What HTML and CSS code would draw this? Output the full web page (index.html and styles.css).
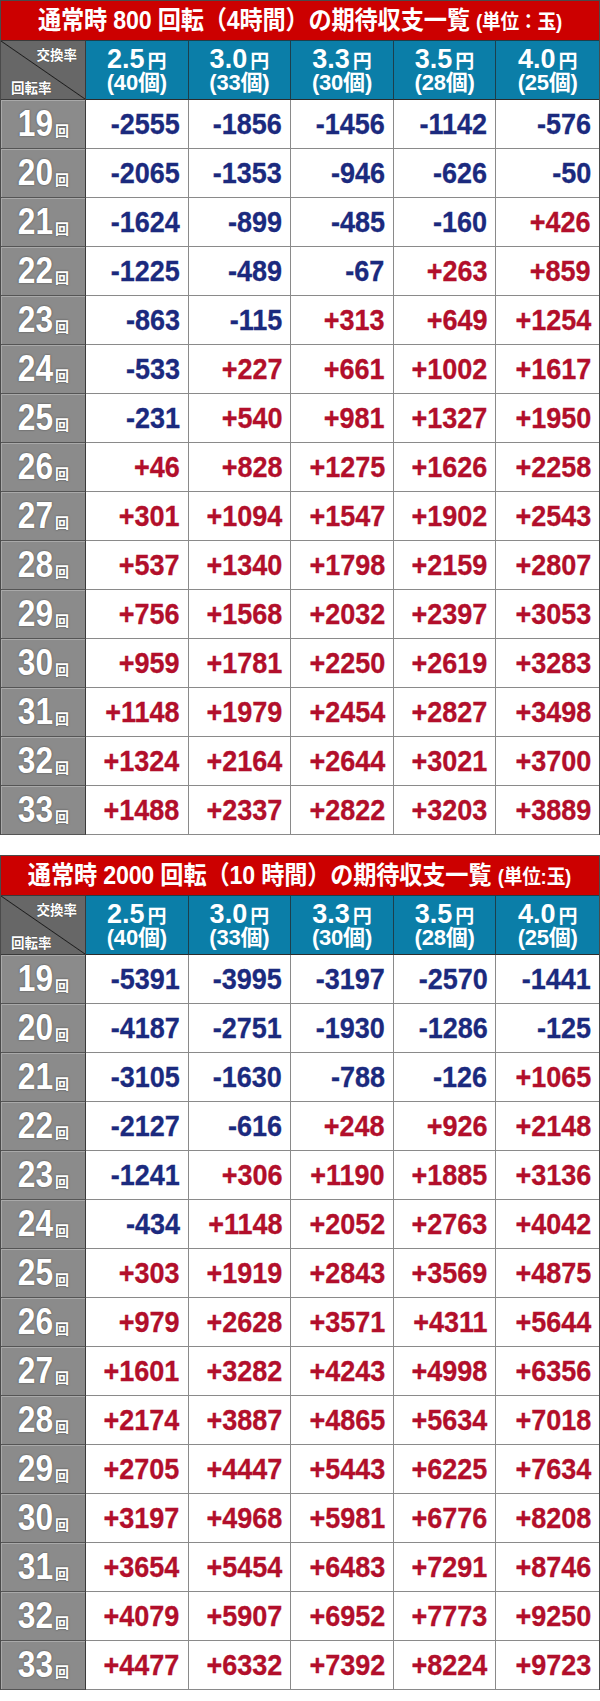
FILE: index.html
```html
<!DOCTYPE html>
<html lang="ja">
<head>
<meta charset="utf-8">
<title>期待収支一覧</title>
<link rel="stylesheet" href="styles.css">
</head>
<body>
<section class="tbl">
  <div class="title"><span class="tt">通常時 800 回転（4時間）の期待収支一覧 <small>(単位：玉)</small></span></div>
  <div class="grid">
    <div class="corner"><span class="c1">交換率</span><span class="c2">回転率</span></div>
    <div class="hd"><span class="l1"><b>2.5</b>円</span><span class="l2">(40個)</span></div>
    <div class="hd"><span class="l1"><b>3.0</b>円</span><span class="l2">(33個)</span></div>
    <div class="hd"><span class="l1"><b>3.3</b>円</span><span class="l2">(30個)</span></div>
    <div class="hd"><span class="l1"><b>3.5</b>円</span><span class="l2">(28個)</span></div>
    <div class="hd"><span class="l1"><b>4.0</b>円</span><span class="l2">(25個)</span></div>

    <div class="rl"><span><b>19</b>回</span></div><div class="c n"><span>-2555</span></div><div class="c n"><span>-1856</span></div><div class="c n"><span>-1456</span></div><div class="c n"><span>-1142</span></div><div class="c n"><span>-576</span></div>
    <div class="rl"><span><b>20</b>回</span></div><div class="c n"><span>-2065</span></div><div class="c n"><span>-1353</span></div><div class="c n"><span>-946</span></div><div class="c n"><span>-626</span></div><div class="c n"><span>-50</span></div>
    <div class="rl"><span><b>21</b>回</span></div><div class="c n"><span>-1624</span></div><div class="c n"><span>-899</span></div><div class="c n"><span>-485</span></div><div class="c n"><span>-160</span></div><div class="c p"><span>+426</span></div>
    <div class="rl"><span><b>22</b>回</span></div><div class="c n"><span>-1225</span></div><div class="c n"><span>-489</span></div><div class="c n"><span>-67</span></div><div class="c p"><span>+263</span></div><div class="c p"><span>+859</span></div>
    <div class="rl"><span><b>23</b>回</span></div><div class="c n"><span>-863</span></div><div class="c n"><span>-115</span></div><div class="c p"><span>+313</span></div><div class="c p"><span>+649</span></div><div class="c p"><span>+1254</span></div>
    <div class="rl"><span><b>24</b>回</span></div><div class="c n"><span>-533</span></div><div class="c p"><span>+227</span></div><div class="c p"><span>+661</span></div><div class="c p"><span>+1002</span></div><div class="c p"><span>+1617</span></div>
    <div class="rl"><span><b>25</b>回</span></div><div class="c n"><span>-231</span></div><div class="c p"><span>+540</span></div><div class="c p"><span>+981</span></div><div class="c p"><span>+1327</span></div><div class="c p"><span>+1950</span></div>
    <div class="rl"><span><b>26</b>回</span></div><div class="c p"><span>+46</span></div><div class="c p"><span>+828</span></div><div class="c p"><span>+1275</span></div><div class="c p"><span>+1626</span></div><div class="c p"><span>+2258</span></div>
    <div class="rl"><span><b>27</b>回</span></div><div class="c p"><span>+301</span></div><div class="c p"><span>+1094</span></div><div class="c p"><span>+1547</span></div><div class="c p"><span>+1902</span></div><div class="c p"><span>+2543</span></div>
    <div class="rl"><span><b>28</b>回</span></div><div class="c p"><span>+537</span></div><div class="c p"><span>+1340</span></div><div class="c p"><span>+1798</span></div><div class="c p"><span>+2159</span></div><div class="c p"><span>+2807</span></div>
    <div class="rl"><span><b>29</b>回</span></div><div class="c p"><span>+756</span></div><div class="c p"><span>+1568</span></div><div class="c p"><span>+2032</span></div><div class="c p"><span>+2397</span></div><div class="c p"><span>+3053</span></div>
    <div class="rl"><span><b>30</b>回</span></div><div class="c p"><span>+959</span></div><div class="c p"><span>+1781</span></div><div class="c p"><span>+2250</span></div><div class="c p"><span>+2619</span></div><div class="c p"><span>+3283</span></div>
    <div class="rl"><span><b>31</b>回</span></div><div class="c p"><span>+1148</span></div><div class="c p"><span>+1979</span></div><div class="c p"><span>+2454</span></div><div class="c p"><span>+2827</span></div><div class="c p"><span>+3498</span></div>
    <div class="rl"><span><b>32</b>回</span></div><div class="c p"><span>+1324</span></div><div class="c p"><span>+2164</span></div><div class="c p"><span>+2644</span></div><div class="c p"><span>+3021</span></div><div class="c p"><span>+3700</span></div>
    <div class="rl"><span><b>33</b>回</span></div><div class="c p"><span>+1488</span></div><div class="c p"><span>+2337</span></div><div class="c p"><span>+2822</span></div><div class="c p"><span>+3203</span></div><div class="c p"><span>+3889</span></div>
  </div>
</section>

<section class="tbl">
  <div class="title"><span class="tt">通常時 2000 回転（10 時間）の期待収支一覧 <small>(単位:玉)</small></span></div>
  <div class="grid">
    <div class="corner"><span class="c1">交換率</span><span class="c2">回転率</span></div>
    <div class="hd"><span class="l1"><b>2.5</b>円</span><span class="l2">(40個)</span></div>
    <div class="hd"><span class="l1"><b>3.0</b>円</span><span class="l2">(33個)</span></div>
    <div class="hd"><span class="l1"><b>3.3</b>円</span><span class="l2">(30個)</span></div>
    <div class="hd"><span class="l1"><b>3.5</b>円</span><span class="l2">(28個)</span></div>
    <div class="hd"><span class="l1"><b>4.0</b>円</span><span class="l2">(25個)</span></div>

    <div class="rl"><span><b>19</b>回</span></div><div class="c n"><span>-5391</span></div><div class="c n"><span>-3995</span></div><div class="c n"><span>-3197</span></div><div class="c n"><span>-2570</span></div><div class="c n"><span>-1441</span></div>
    <div class="rl"><span><b>20</b>回</span></div><div class="c n"><span>-4187</span></div><div class="c n"><span>-2751</span></div><div class="c n"><span>-1930</span></div><div class="c n"><span>-1286</span></div><div class="c n"><span>-125</span></div>
    <div class="rl"><span><b>21</b>回</span></div><div class="c n"><span>-3105</span></div><div class="c n"><span>-1630</span></div><div class="c n"><span>-788</span></div><div class="c n"><span>-126</span></div><div class="c p"><span>+1065</span></div>
    <div class="rl"><span><b>22</b>回</span></div><div class="c n"><span>-2127</span></div><div class="c n"><span>-616</span></div><div class="c p"><span>+248</span></div><div class="c p"><span>+926</span></div><div class="c p"><span>+2148</span></div>
    <div class="rl"><span><b>23</b>回</span></div><div class="c n"><span>-1241</span></div><div class="c p"><span>+306</span></div><div class="c p"><span>+1190</span></div><div class="c p"><span>+1885</span></div><div class="c p"><span>+3136</span></div>
    <div class="rl"><span><b>24</b>回</span></div><div class="c n"><span>-434</span></div><div class="c p"><span>+1148</span></div><div class="c p"><span>+2052</span></div><div class="c p"><span>+2763</span></div><div class="c p"><span>+4042</span></div>
    <div class="rl"><span><b>25</b>回</span></div><div class="c p"><span>+303</span></div><div class="c p"><span>+1919</span></div><div class="c p"><span>+2843</span></div><div class="c p"><span>+3569</span></div><div class="c p"><span>+4875</span></div>
    <div class="rl"><span><b>26</b>回</span></div><div class="c p"><span>+979</span></div><div class="c p"><span>+2628</span></div><div class="c p"><span>+3571</span></div><div class="c p"><span>+4311</span></div><div class="c p"><span>+5644</span></div>
    <div class="rl"><span><b>27</b>回</span></div><div class="c p"><span>+1601</span></div><div class="c p"><span>+3282</span></div><div class="c p"><span>+4243</span></div><div class="c p"><span>+4998</span></div><div class="c p"><span>+6356</span></div>
    <div class="rl"><span><b>28</b>回</span></div><div class="c p"><span>+2174</span></div><div class="c p"><span>+3887</span></div><div class="c p"><span>+4865</span></div><div class="c p"><span>+5634</span></div><div class="c p"><span>+7018</span></div>
    <div class="rl"><span><b>29</b>回</span></div><div class="c p"><span>+2705</span></div><div class="c p"><span>+4447</span></div><div class="c p"><span>+5443</span></div><div class="c p"><span>+6225</span></div><div class="c p"><span>+7634</span></div>
    <div class="rl"><span><b>30</b>回</span></div><div class="c p"><span>+3197</span></div><div class="c p"><span>+4968</span></div><div class="c p"><span>+5981</span></div><div class="c p"><span>+6776</span></div><div class="c p"><span>+8208</span></div>
    <div class="rl"><span><b>31</b>回</span></div><div class="c p"><span>+3654</span></div><div class="c p"><span>+5454</span></div><div class="c p"><span>+6483</span></div><div class="c p"><span>+7291</span></div><div class="c p"><span>+8746</span></div>
    <div class="rl"><span><b>32</b>回</span></div><div class="c p"><span>+4079</span></div><div class="c p"><span>+5907</span></div><div class="c p"><span>+6952</span></div><div class="c p"><span>+7773</span></div><div class="c p"><span>+9250</span></div>
    <div class="rl"><span><b>33</b>回</span></div><div class="c p"><span>+4477</span></div><div class="c p"><span>+6332</span></div><div class="c p"><span>+7392</span></div><div class="c p"><span>+8224</span></div><div class="c p"><span>+9723</span></div>
  </div>
</section>
</body>
</html>
```

FILE: styles.css
```css
* { box-sizing: border-box; }

html, body {
  margin: 0;
  padding: 0;
  background: #ffffff;
}

body {
  width: 600px;
  font-family: "Liberation Sans", "Noto Sans CJK JP", sans-serif;
}

.tbl {
  width: 600px;
  margin-bottom: 20px;
}

.title {
  height: 40px;
  background: #cc0000;
  border: 1px solid #4a4a4a;
  border-bottom: none;
  display: flex;
  align-items: center;
  justify-content: center;
  color: #ffffff;
  overflow: hidden;
}

.tt {
  display: inline-block;
  font-weight: bold;
  font-size: 25.5px;
  line-height: 1;
  white-space: nowrap;
  transform: scaleX(0.91);
  letter-spacing: -0.2px;
}

.tt small {
  font-size: 20.5px;
}

.grid {
  display: grid;
  grid-template-columns: 85px repeat(5, 1fr);
  grid-template-rows: 60px repeat(15, 49px);
  border-left: 1px solid #4a4a4a;
  border-right: 1px solid #4a4a4a;
}

/* corner header cell */
.corner {
  position: relative;
  background:
    linear-gradient(to top right, transparent calc(50% - 0.9px), #1e1e1e 50%, transparent calc(50% + 0.9px)),
    #676767;
  border-right: 1px solid #3a3a3a;
  border-bottom: 1px solid #3a3a3a;
  border-top: 1px solid #3a3a3a;
  color: #ffffff;
  font-family: "Noto Sans CJK JP", sans-serif;
  font-weight: bold;
  font-size: 13.5px;
  line-height: 1;
  text-shadow: 0 0 1px rgba(0, 0, 0, 0.6);
}

.corner .c1 {
  position: absolute;
  top: 7px;
  right: 8px;
}

.corner .c2 {
  position: absolute;
  left: 10px;
  bottom: 5px;
}

/* blue header cells */
.hd {
  background: #0b7ea8;
  border-right: 1px solid #1d3f4c;
  border-bottom: 1px solid #2c2c2c;
  border-top: 1px solid #1d3f4c;
  color: #ffffff;
  display: flex;
  flex-direction: column;
  align-items: center;
  justify-content: center;
  padding-top: 1px;
  font-weight: bold;
}

.hd:nth-child(6) {
  border-right: none;
}

.hd .l1 {
  font-family: "Noto Sans CJK JP", sans-serif;
  font-size: 19px;
  line-height: 24px;
  height: 24px;
  display: flex;
  align-items: baseline;
}

.hd .l1 b {
  font-family: "Liberation Sans", sans-serif;
  font-size: 27px;
  margin-right: 3px;
}

.hd .l2 {
  font-family: "Liberation Sans", "Noto Sans CJK JP", sans-serif;
  font-size: 22px;
  line-height: 24px;
  letter-spacing: -0.2px;
}

/* row labels */
.rl {
  background: #8b8b8b;
  border-right: 1px solid #3a3a3a;
  border-bottom: 1px solid #555555;
  box-shadow: inset 1px 1px 0 #a9a9a9;
  display: flex;
  align-items: center;
  justify-content: center;
  color: #ffffff;
  text-shadow: 0 0 2px rgba(0, 0, 0, 0.55);
}

.rl span {
  display: inline-flex;
  align-items: baseline;
  font-family: "Noto Sans CJK JP", sans-serif;
  font-weight: bold;
  font-size: 14px;
  line-height: 1;
}

.rl b {
  font-family: "Liberation Sans", sans-serif;
  font-size: 36px;
  display: inline-block;
  transform: scaleX(0.88);
  transform-origin: right center;
  margin-left: -4px;
  margin-right: 2px;
}

/* data cells */
.c {
  border-right: 1px solid #8a8a8a;
  border-bottom: 1px solid #8a8a8a;
  display: flex;
  align-items: center;
  justify-content: flex-end;
  padding-right: 8px;
  background: #ffffff;
}

.c:nth-child(6n) {
  border-right: none;
}

.c span {
  display: inline-block;
  font-family: "Liberation Sans", sans-serif;
  font-weight: bold;
  font-size: 30px;
  line-height: 1;
  transform: scaleX(0.9);
  transform-origin: right center;
  -webkit-text-stroke: 0.3px currentColor;
}

.n { color: #1b2a7e; }
.p { color: #b20f2b; }
```
